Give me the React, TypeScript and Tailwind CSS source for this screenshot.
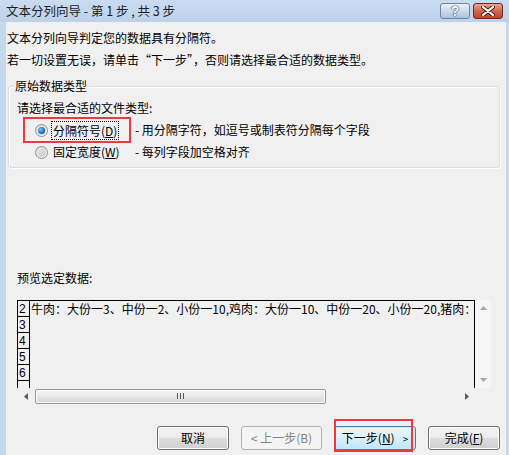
import React from 'react';

const cjk = "font-['Noto_Sans_CJK_SC',sans-serif]";

const Radio = ({ checked }: { checked?: boolean }) => (
  <span className="relative flex h-[13px] w-[13px] shrink-0 items-center justify-center rounded-full border border-[#8c8e8f] bg-gradient-to-br from-[#d8d9da] to-[#ffffff]">
    <span className="h-[9px] w-[9px] rounded-full bg-gradient-to-br from-[#e8e8e8] to-[#c9c9c9] flex items-center justify-center">
      {checked && (
        <span className="h-[7px] w-[7px] rounded-full bg-[radial-gradient(circle_at_35%_35%,#7fc4f5,#1d6fb5_60%,#0d4a85)]" />
      )}
    </span>
  </span>
);

const Btn = ({
  children,
  w,
  disabled,
  focused,
}: {
  children: React.ReactNode;
  w: string;
  disabled?: boolean;
  focused?: boolean;
}) => (
  <div className={`relative h-[24px] ${w}`}>
    <div
      className={`flex h-full w-full items-center justify-center rounded-[3px] border text-[12px] ${
        disabled
          ? 'border-[#adb2b5] bg-[#f4f4f4] text-[#838383]'
          : focused
          ? 'border-[#3c7fb1] bg-gradient-to-b from-[#eaf6fd] via-[#d9f0fc] to-[#bee6fd] text-black shadow-[inset_0_0_0_1px_#c8e8fb]'
          : 'border-[#707070] bg-[linear-gradient(#f2f2f2_0%,#ebebeb_50%,#dddddd_51%,#cfcfcf_100%)] text-black shadow-[inset_0_0_0_1px_#fcfcfc]'
      }`}
    >
      {children}
    </div>
    {focused && (
      <div className="absolute -top-[7px] -bottom-[2px] left-0 right-[3px] border-2 border-[#ee3a3c]" />
    )}
  </div>
);

const App = () => {
  return (
    <div className={`flex h-[455px] w-[509px] flex-col overflow-hidden bg-[#c4d8ee] ${cjk} text-[12px] text-black`}>
      {/* title bar */}
      <div className="flex h-[22px] items-center bg-gradient-to-b from-[#c9dcf1] to-[#bcd1ea] pl-[6px] pr-[6px]">
        <span className="flex-1 text-[12.5px] leading-[16px] text-[#1e1e1e]">文本分列向导 - 第 1 步 , 共 3 步</span>
        <div className="flex gap-[3px] self-start pt-[3px]">
          <div className="flex h-[16px] w-[30px] items-center justify-center rounded-[3px] border border-[#6c84a3] bg-gradient-to-b from-[#e9f0f8] via-[#cddbec] to-[#aec3dc]">
            <span className="font-['Liberation_Sans',sans-serif] text-[14px] font-bold leading-none text-white [text-shadow:0_0_1px_#2d3f57,0_0_1px_#2d3f57,0_0_1px_#2d3f57]">?</span>
          </div>
          <div className="flex h-[16px] w-[30px] items-center justify-center rounded-[3px] border border-[#6a2a25] bg-gradient-to-b from-[#e7a493] via-[#d26650] to-[#c2412c]">
            <svg width="14" height="10" viewBox="0 0 14 10">
              <path d="M2 1 L12 9 M12 1 L2 9" stroke="#4a1d18" strokeWidth="4" strokeLinecap="round" />
              <path d="M2 1 L12 9 M12 1 L2 9" stroke="#ffffff" strokeWidth="2.2" strokeLinecap="round" />
            </svg>
          </div>
        </div>
      </div>

      {/* client area */}
      <div className="ml-[6px] mr-[3px] flex-1 bg-[#f0f0f0] pt-[8px]">
        <div className="pl-[1px] leading-[16px]">文本分列向导判定您的数据具有分隔符。</div>
        <div className="mt-[6px] pl-[1px] leading-[16px]">若一切设置无误，请单击“下一步”，否则请选择最合适的数据类型。</div>

        {/* group box */}
        <div className="relative ml-[2px] mt-[18px] h-[82px] w-[492px] rounded-[3px] border border-[#d5dfe5] shadow-[inset_1px_1px_0_#ffffff,1px_1px_0_#ffffff]">
          <span className="absolute -top-[9px] left-[5px] bg-[#f0f0f0] px-[1px] leading-[16px]">原始数据类型</span>
          <div className="pl-[8px] pt-[13px] leading-[16px]">请选择最合适的文件类型:</div>

          <div className="relative mt-[4px] flex h-[20px] items-center pl-[26px]">
            <Radio checked />
            <div className="ml-[3px] w-[84px]">
              <span className="inline-block border border-dotted border-black px-[1px] leading-[17px]">
                分隔符号(<span className="underline">D</span>)
              </span>
            </div>
            <span>- 用分隔字符，如逗号或制表符分隔每个字段</span>
            <div className="absolute -top-[3px] left-[14px] h-[26px] w-[108px] border-2 border-[#ee3a3c]" />
          </div>

          <div className="mt-[2px] flex h-[20px] items-center pl-[26px]">
            <Radio />
            <div className="ml-[3px] w-[84px] pl-[2px]">
              固定宽度(<span className="underline">W</span>)
            </div>
            <span>- 每列字段加空格对齐</span>
          </div>
        </div>

        <div className="ml-[11px] mt-[102px] leading-[16px]">预览选定数据:</div>

        {/* preview */}
        <div className="ml-[11px] mt-[14px] w-[474px]">
          <div className="flex h-[88px]">
            <div className="w-[458px] overflow-hidden border-l border-r border-t border-black">
              {['2', '3', '4', '5', '6', ''].map((n, i) => (
                <div key={i} className="flex h-[16px]">
                  <div className="w-[12px] shrink-0 border-b border-r border-black pl-[1px] font-['Liberation_Sans',sans-serif] text-[12px] leading-[16px]">
                    {n}
                  </div>
                  {n === '2' && (
                    <div className="whitespace-nowrap pl-[1px] text-[12px] leading-[16px]">
                      牛肉：大份一3、中份一2、小份一10,鸡肉：大份一10、中份一20、小份一20,猪肉：
                    </div>
                  )}
                </div>
              ))}
            </div>
            <div className="flex w-[16px] flex-col items-center justify-between bg-[#f6f6f6] py-[6px]">
              <svg width="7" height="4" viewBox="0 0 7 4"><path d="M0 4 L3.5 0 L7 4 Z" fill="#a3a3a3" /></svg>
              <svg width="7" height="4" viewBox="0 0 7 4"><path d="M0 0 L3.5 4 L7 0 Z" fill="#a3a3a3" /></svg>
            </div>
          </div>
          <div className="flex h-[16px]">
            <div className="flex w-[458px] items-center bg-[#f0f0f0]">
              <div className="flex w-[18px] justify-center">
                <svg width="4" height="7" viewBox="0 0 4 7"><path d="M4 0 L0 3.5 L4 7 Z" fill="#5a5a5a" /></svg>
              </div>
              <div className="flex h-[15px] w-[291px] items-center justify-center rounded-[2px] border border-[#979797] bg-gradient-to-b from-[#f3f3f3] via-[#e8e8e8] to-[#d4d4d4] shadow-[inset_0_0_0_1px_#fbfbfb]">
                <div className="flex gap-[2px]">
                  <span className="h-[6px] w-px bg-[#555]" />
                  <span className="h-[6px] w-px bg-[#555]" />
                  <span className="h-[6px] w-px bg-[#555]" />
                </div>
              </div>
              <div className="flex-1" />
              <div className="flex w-[16px] justify-center">
                <svg width="4" height="7" viewBox="0 0 4 7"><path d="M0 0 L4 3.5 L0 7 Z" fill="#5a5a5a" /></svg>
              </div>
            </div>
            <div className="w-[16px]" />
          </div>
        </div>

        {/* buttons */}
        <div className="mt-[22px] flex justify-end gap-[12px] pr-[6px]">
          <Btn w="w-[72px]">取消</Btn>
          <Btn w="w-[81px]" disabled>
            &lt; 上一步(B)
          </Btn>
          <Btn w="w-[82px]" focused>
            <span>
              下一步(<span className="underline">N</span>)
            </span>
            <span className="ml-[8px] text-[10px]">&gt;</span>
          </Btn>
          <Btn w="w-[72px]">
            <span>
              完成(<span className="underline">F</span>)
            </span>
          </Btn>
        </div>
      </div>
    </div>
  );
};

export default App;
